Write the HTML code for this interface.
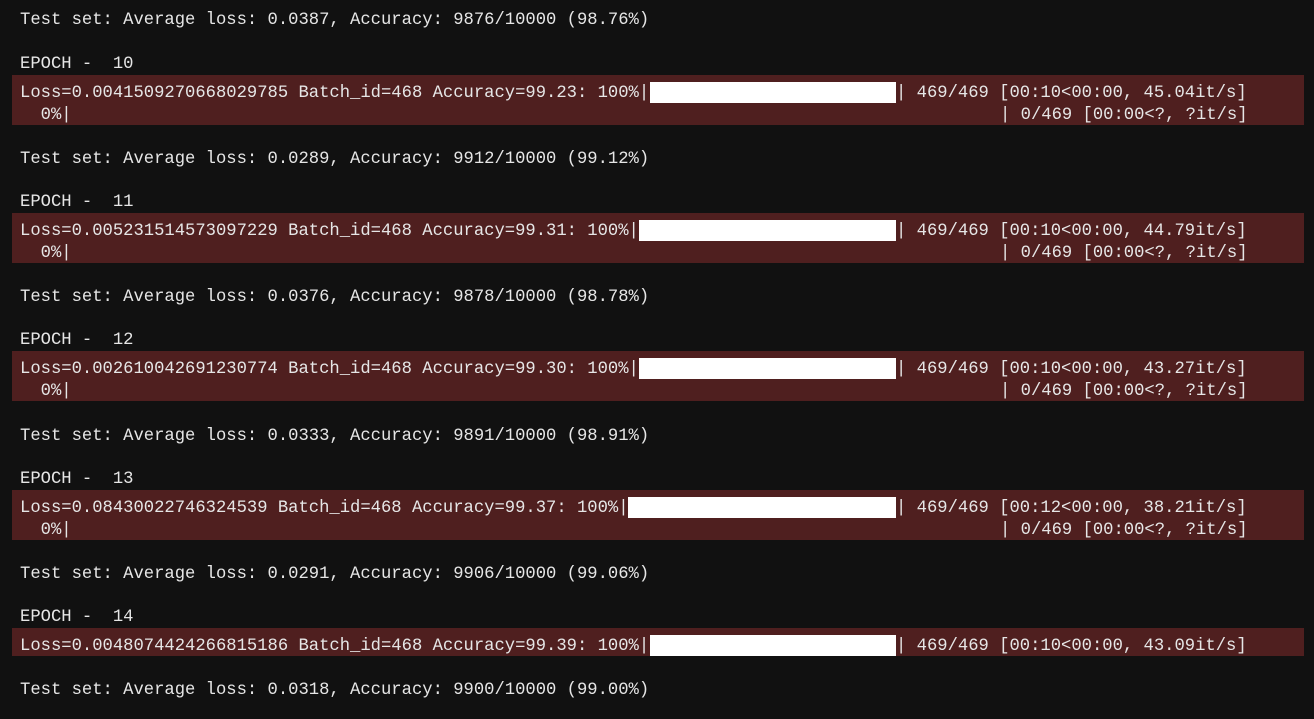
<!DOCTYPE html>
<html><head><meta charset="utf-8"><style>
html,body{margin:0;padding:0;background:#111111;width:1314px;height:719px;overflow:hidden}
body{position:relative;font-family:"Liberation Mono",monospace;font-size:17.2px;color:#e6e6e6}
.l{position:absolute;height:22px;line-height:22px;white-space:pre;margin-top:2px}
.b{position:absolute;left:12px;width:1292px;background:#4f1f1f}
.w{position:absolute;background:#fff;height:21px}
</style></head><body>
<div class="l" style="left:20px;top:8px">Test set: Average loss: 0.0387, Accuracy: 9876/10000 (98.76%)</div>

<div class="l" style="left:20px;top:52px">EPOCH -  10</div>
<div class="b" style="top:75px;height:50px"></div>
<div class="l" style="left:20px;top:81px">Loss=0.0041509270668029785 Batch_id=468 Accuracy=99.23: 100%|</div>
<div class="w" style="left:650px;top:82px;width:246px"></div>
<div class="l" style="left:896px;top:81px">| 469/469 [00:10&lt;00:00, 45.04it/s]</div>
<div class="l" style="left:20px;top:103px">  0%|</div>
<div class="l" style="left:1000px;top:103px">| 0/469 [00:00&lt;?, ?it/s]</div>
<div class="l" style="left:20px;top:147px">Test set: Average loss: 0.0289, Accuracy: 9912/10000 (99.12%)</div>

<div class="l" style="left:20px;top:190px">EPOCH -  11</div>
<div class="b" style="top:213px;height:50px"></div>
<div class="l" style="left:20px;top:219px">Loss=0.005231514573097229 Batch_id=468 Accuracy=99.31: 100%|</div>
<div class="w" style="left:639px;top:220px;width:257px"></div>
<div class="l" style="left:896px;top:219px">| 469/469 [00:10&lt;00:00, 44.79it/s]</div>
<div class="l" style="left:20px;top:241px">  0%|</div>
<div class="l" style="left:1000px;top:241px">| 0/469 [00:00&lt;?, ?it/s]</div>
<div class="l" style="left:20px;top:285px">Test set: Average loss: 0.0376, Accuracy: 9878/10000 (98.78%)</div>

<div class="l" style="left:20px;top:328px">EPOCH -  12</div>
<div class="b" style="top:351px;height:50px"></div>
<div class="l" style="left:20px;top:357px">Loss=0.002610042691230774 Batch_id=468 Accuracy=99.30: 100%|</div>
<div class="w" style="left:639px;top:358px;width:257px"></div>
<div class="l" style="left:896px;top:357px">| 469/469 [00:10&lt;00:00, 43.27it/s]</div>
<div class="l" style="left:20px;top:379px">  0%|</div>
<div class="l" style="left:1000px;top:379px">| 0/469 [00:00&lt;?, ?it/s]</div>
<div class="l" style="left:20px;top:424px">Test set: Average loss: 0.0333, Accuracy: 9891/10000 (98.91%)</div>

<div class="l" style="left:20px;top:467px">EPOCH -  13</div>
<div class="b" style="top:490px;height:50px"></div>
<div class="l" style="left:20px;top:496px">Loss=0.08430022746324539 Batch_id=468 Accuracy=99.37: 100%|</div>
<div class="w" style="left:628px;top:497px;width:268px"></div>
<div class="l" style="left:896px;top:496px">| 469/469 [00:12&lt;00:00, 38.21it/s]</div>
<div class="l" style="left:20px;top:518px">  0%|</div>
<div class="l" style="left:1000px;top:518px">| 0/469 [00:00&lt;?, ?it/s]</div>
<div class="l" style="left:20px;top:562px">Test set: Average loss: 0.0291, Accuracy: 9906/10000 (99.06%)</div>

<div class="l" style="left:20px;top:605px">EPOCH -  14</div>
<div class="b" style="top:628px;height:28px"></div>
<div class="l" style="left:20px;top:634px">Loss=0.0048074424266815186 Batch_id=468 Accuracy=99.39: 100%|</div>
<div class="w" style="left:650px;top:635px;width:246px"></div>
<div class="l" style="left:896px;top:634px">| 469/469 [00:10&lt;00:00, 43.09it/s]</div>
<div class="l" style="left:20px;top:678px">Test set: Average loss: 0.0318, Accuracy: 9900/10000 (99.00%)</div>
</body></html>
